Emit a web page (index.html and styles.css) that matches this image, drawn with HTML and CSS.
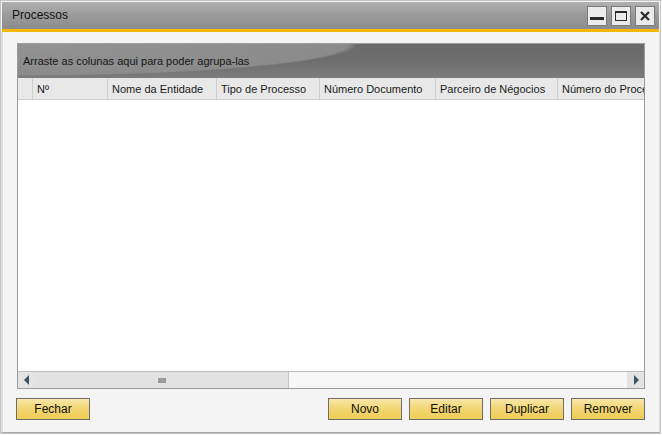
FILE: index.html
```html
<!DOCTYPE html>
<html lang="pt">
<head>
<meta charset="utf-8">
<title>Processos</title>
<link rel="stylesheet" href="styles.css">
</head>
<body>
<div class="window">
  <div class="titlebar">
    <span class="title">Processos</span>
    <div class="controls">
      <span class="ctl"><svg width="18" height="18" viewBox="0 0 18 18"><rect x="2" y="10" width="14" height="3" fill="#2a2a2a"/></svg></span>
      <span class="ctl"><svg width="18" height="18" viewBox="0 0 18 18"><rect x="3.5" y="4.5" width="11" height="9" fill="none" stroke="#2a2a2a" stroke-width="1"/><rect x="3" y="4" width="12" height="2" fill="#2a2a2a"/></svg></span>
      <span class="ctl"><svg width="18" height="18" viewBox="0 0 18 18"><path d="M5 5 L13 13 M13 5 L5 13" stroke="#2a2a2a" stroke-width="2.2"/></svg></span>
    </div>
  </div>
  <div class="accent"></div>
  <div class="content">
    <div class="grid">
      <div class="groupbar">Arraste as colunas aqui para poder agrupa-las</div>
      <div class="colheader">
        <div class="cell ind"></div>
        <div class="cell c1">Nº</div>
        <div class="cell c2">Nome da Entidade</div>
        <div class="cell c3">Tipo de Processo</div>
        <div class="cell c4">Número Documento</div>
        <div class="cell c5">Parceiro de Négocios</div>
        <div class="cell c6">Número do Processo</div>
      </div>
      <div class="rows"></div>
      <div class="hscroll">
        <div class="arrow left"><svg width="8" height="10" viewBox="0 0 8 10"><path d="M6 0 L6 10 L1 5 Z" fill="#3e5566"/></svg></div>
        <div class="thumb"><span class="grip"></span></div>
        <div class="track"></div>
        <div class="arrow right"><svg width="8" height="10" viewBox="0 0 8 10"><path d="M2 0 L2 10 L7 5 Z" fill="#3e5566"/></svg></div>
      </div>
    </div>
    <div class="buttons">
      <button class="btn">Fechar</button>
      <div class="spacer"></div>
      <button class="btn">Novo</button>
      <button class="btn">Editar</button>
      <button class="btn">Duplicar</button>
      <button class="btn">Remover</button>
    </div>
  </div>
</div>
</body>
</html>
```
FILE: styles.css
```css
* { box-sizing: border-box; }
html, body { margin: 0; padding: 0; background: #ffffff; }
body { font-family: "Liberation Sans", Arial, sans-serif; font-size: 11px; color: #111; }

.window {
  width: 661px;
  height: 434px;
  border: 1px solid #c4c4c4;
  background: #f4f4f4;
  display: flex;
  flex-direction: column;
}

.titlebar {
  height: 27px;
  margin: 1px 1px 0 1px;
  background: linear-gradient(#b0b0b0, #9a9a9a 50%, #8c8c8c);
  display: flex;
  align-items: center;
  padding-left: 10px;
  padding-right: 4px;
}
.title { font-size: 12px; color: #111; flex: 1; padding-bottom: 1px; }
.controls { display: flex; gap: 4px; padding-top: 1px; }
.ctl {
  width: 20px; height: 20px;
  border: 1px solid #7a7a7a;
  background: #ebebeb;
  display: flex; align-items: center; justify-content: center;
}

.accent { height: 3px; margin: 0 1px; background: #f4b800; }

.content {
  flex: 1;
  padding: 11px 14px 0 13px;
  display: flex;
  flex-direction: column;
  border-left: 2px solid #dcdcdc;
  border-right: 1px solid #dcdcdc;
  border-bottom: 1px solid #a8a8a8;
}

.grid {
  width: 628px;
  height: 346px;
  margin-left: 1px;
  border: 1px solid #9c9c9c;
  background: #ffffff;
  display: flex;
  flex-direction: column;
  overflow: hidden;
}

.groupbar {
  height: 34px;
  flex: none;
  padding: 11px 0 0 5px;
  color: #151515;
  font-size: 11px;
  background:
    radial-gradient(ellipse 340px 32px at 0 0, #939393 0, #8b8b8b 97%, rgba(0,0,0,0) 100%),
    linear-gradient(#6a6a6a, #6e6e6e 50%, #7c7c7c);
}

.colheader {
  height: 22px;
  flex: none;
  display: flex;
  background: #e8e8e8;
  border-bottom: 1px solid #cfcfcf;
  white-space: nowrap;
}
.cell {
  flex: none;
  border-right: 1px solid #cfcfcf;
  padding: 5px 0 0 4px;
  color: #1a1a1a;
  overflow: hidden;
}
.ind { width: 15px; padding: 0; }
.c1 { width: 75px; }
.c2 { width: 109px; }
.c3 { width: 103px; }
.c4 { width: 116px; }
.c5 { width: 122px; }
.c6 { width: 100px; border-right: none; }

.rows { flex: 1; background: #fff; }

.hscroll {
  height: 17px;
  flex: none;
  display: flex;
  border-top: 1px solid #bdbdbd;
  background: #f7f7f7;
}
.arrow {
  width: 17px;
  display: flex; align-items: center; justify-content: center;
  background: #e4e4e4;
}
.thumb {
  width: 254px;
  background: #e2e2e2;
  border-right: 1px solid #c6c6c6;
  display: flex; align-items: center; justify-content: center;
}
.grip {
  width: 8px; height: 5px;
  background-image: radial-gradient(circle, #9a9a9a 0.8px, transparent 1px);
  background-size: 2px 2px;
}
.track { flex: 1; }

.buttons {
  display: flex;
  gap: 7px;
  margin-top: 9px;
  width: 629px;
}
.spacer { flex: 1; }
.btn {
  width: 74px;
  height: 22px;
  border: 1px solid #6e6e6e;
  background: linear-gradient(#f8e6a8, #f2d672 50%, #efcc55);
  font-family: "Liberation Sans", Arial, sans-serif;
  font-size: 12px;
  color: #111;
  padding: 0;
}
```
